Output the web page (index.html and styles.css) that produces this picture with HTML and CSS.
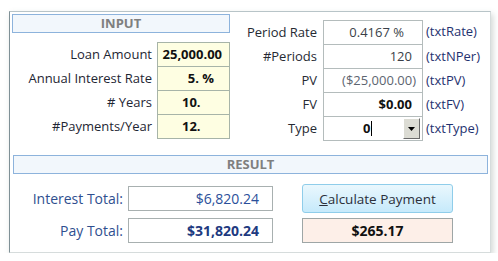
FILE: index.html
```html
<!DOCTYPE html>
<html lang="en">

<head>
    <meta charset="UTF-8">
    <title>Loan Payment</title>
    <link rel="stylesheet" href="styles.css">
</head>

<body>
    <div class="panel">
        <div class="top">
            <div class="input_col">
                <div class="head">INPUT</div>
                <div class="fields">
                    <span class="lbl">Loan Amount</span>
                    <div class="inbox pr_8">25,000.00</div>
                    <span class="lbl">Annual Interest Rate</span>
                    <div class="inbox pr_16">5. %</div>
                    <span class="lbl"># Years</span>
                    <div class="inbox pl_25">10.</div>
                    <span class="lbl">#Payments/Year</span>
                    <div class="inbox pl_25">12.</div>
                </div>
            </div>
            <div class="params">
                <span class="lbl">Period Rate</span>
                <div class="pbox pr_18">0.4167 %</div>
                <span class="name">(txtRate)</span>
                <span class="lbl">#Periods</span>
                <div class="pbox">120</div>
                <span class="name">(txtNPer)</span>
                <span class="lbl">PV</span>
                <div class="pbox grey">($25,000.00)</div>
                <span class="name">(txtPV)</span>
                <span class="lbl">FV</span>
                <div class="pbox bold">$0.00</div>
                <span class="name">(txtFV)</span>
                <span class="lbl">Type</span>
                <div class="pbox combo">
                    <span class="combo_val">0<i class="caret"></i></span>
                    <span class="drop"><svg width="7" height="4" viewBox="0 0 7 4"><path d="M0 0h7L3.5 4z" fill="#000"/></svg></span>
                </div>
                <span class="name">(txtType)</span>
            </div>
        </div>
        <div class="head result_head">RESULT</div>
        <div class="result">
            <span class="rlbl">Interest Total:</span>
            <div class="rbox">$6,820.24</div>
            <button class="calc"><u>C</u>alculate Payment</button>
            <span class="rlbl">Pay Total:</span>
            <div class="rbox strong">$31,820.24</div>
            <div class="payment">$265.17</div>
        </div>
    </div>
</body>

</html>
```
FILE: styles.css
```css
body {
    margin: 0;
    background: #fff;
    font-family: "Open Sans", "Noto Sans", sans-serif;
    font-size: 13px;
    color: #1e2633;
}

.panel {
    width: 480px;
    margin: 11px 0 0 9px;
    padding: 2px 0 9px;
    border: 1px solid #d6dcdc;
    border-left-color: #7f9096;
    border-top-color: #b8c4c8;
    box-shadow: 2px 3px 6px rgba(90, 110, 100, .28);
    box-sizing: content-box;
}

.top {
    display: flex;
}

.input_col {
    width: 218px;
    margin-left: 2px;
}

.head {
    height: 17px;
    line-height: 17px;
    border: 1px solid #8db3dc;
    background: #f2f7fc;
    color: #7f7f7f;
    font-weight: bold;
    text-align: center;
}

.fields {
    display: grid;
    grid-template-columns: 140px 73px;
    column-gap: 5px;
    margin-top: 9px;
}

.lbl {
    text-align: right;
    line-height: 24px;
    white-space: nowrap;
}

.fields .lbl:not(:first-child),
.params .lbl:not(:first-child) {
    margin-top: -1px;
}

.inbox {
    height: 23px;
    line-height: 23px;
    border: 1px solid #a7b4a8;
    background: #fefee2;
    font-weight: bold;
    color: #111;
    text-align: right;
}

.inbox + .lbl + .inbox,
.pbox + .name + .lbl + .pbox {
    margin-top: -1px;
}

.pr_8 {
    padding-right: 7px;
}

.pr_16 {
    padding-right: 15px;
}

.pl_25 {
    text-align: left;
    padding-left: 24px;
}

.params {
    display: grid;
    grid-template-columns: 81px 100px auto;
    column-gap: 6px;
    margin-top: 6px;
    margin-left: 6px;
}

.params .lbl {
    color: #262a33;
}

.pbox {
    height: 23px;
    line-height: 23px;
    border: 1px solid #b4bcbc;
    background: #fff;
    text-align: right;
    padding-right: 10px;
    color: #3a3f48;
}

.params .pbox:first-of-type {
    padding-right: 18px;
}

.grey {
    color: #5d6570;
    padding-right: 6px;
}

.bold {
    font-weight: bold;
    color: #111;
}

.name {
    margin-left: -3px;
    line-height: 22px;
    color: #1f3270;
}

.combo {
    display: flex;
    justify-content: space-between;
    padding-right: 2px;
}

.combo_val {
    margin-left: 39px;
    font-weight: bold;
    color: #111;
}

.caret {
    display: inline-block;
    width: 1px;
    height: 15px;
    margin-left: 1px;
    vertical-align: -3px;
    background: #000;
}

.drop {
    width: 15px;
    height: 19px;
    margin-top: 1px;
    border: 1px solid #fff;
    border-right-color: #6a6a6a;
    border-bottom-color: #6a6a6a;
    background: #dcdcd4;
    display: flex;
    align-items: center;
    justify-content: center;
}

.result_head {
    margin: 14px 2px 0 3px;
}

.result {
    display: grid;
    grid-template-columns: 113px 145px 175px;
    grid-template-rows: 29px 25px;
    column-gap: 5px;
    row-gap: 5px;
    align-items: center;
    margin-top: 10px;
}

.rlbl {
    text-align: right;
    font-size: 14px;
    color: #2f4f8f;
}

.rbox {
    height: 23px;
    line-height: 23px;
    border: 1px solid #a8b0b0;
    text-align: right;
    padding-right: 13px;
    font-size: 14px;
    color: #2a4f9a;
}

.strong {
    font-weight: bold;
    color: #1e3a80;
}

.calc {
    height: 29px;
    margin-left: 24px;
    border: 1px solid #8fcdea;
    border-radius: 3px;
    background: linear-gradient(#eaf7fd, #c6eafb);
    font-family: inherit;
    font-size: 13.5px;
    color: #2b2f3a;
    padding: 0;
}

.payment {
    height: 23px;
    line-height: 23px;
    margin-left: 24px;
    border: 1px solid #9ea6a6;
    background: #fdefe8;
    text-align: center;
    font-size: 14px;
    font-weight: bold;
    color: #111;
}
```
